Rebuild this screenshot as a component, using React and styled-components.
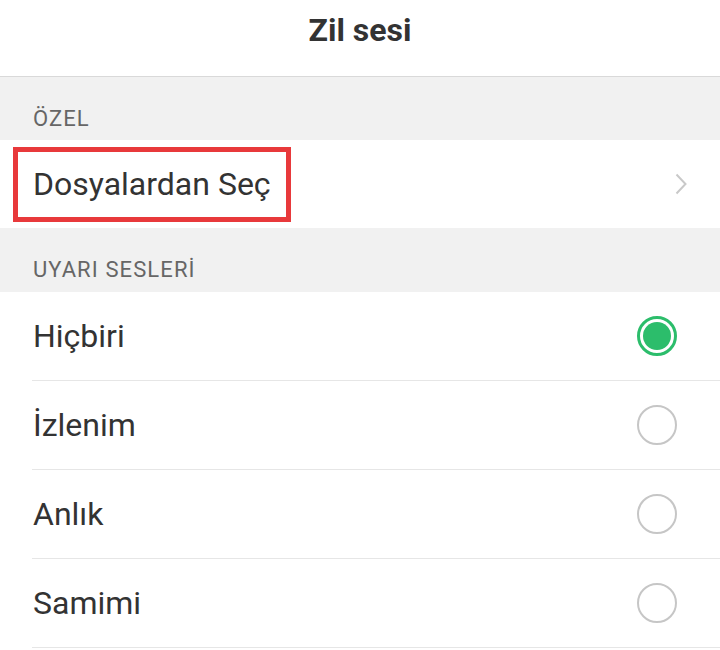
import React, { useState } from 'react';
import styled, { createGlobalStyle } from 'styled-components';

const GlobalStyle = createGlobalStyle`
  html, body {
    margin: 0;
    padding: 0;
    background: #ffffff;
  }

  body {
    font-family: Roboto, "Noto Sans", "Liberation Sans", sans-serif;
    -webkit-font-smoothing: antialiased;
  }
`;

const Page = styled.div`
  width: 720px;
  height: 650px;
  overflow: hidden;
  background: #ffffff;
`;

const Header = styled.header`
  display: flex;
  justify-content: center;
  height: 77px;
  padding-top: 11px;
  box-sizing: border-box;
  border-bottom: 1px solid #d9d9d9;
`;

const Title = styled.h1`
  margin: 0;
  font-size: 32px;
  line-height: 38px;
  font-weight: 700;
  color: #333333;
`;

const SectionLabel = styled.div`
  height: ${({ tall }) => (tall ? '64px' : '63px')};
  padding: 31px 0 0 33px;
  box-sizing: border-box;
  background: #f1f1f1;
  font-size: 22px;
  line-height: 22px;
  letter-spacing: 1.1px;
  color: #666666;
`;

const Row = styled.div`
  display: flex;
  align-items: center;
  justify-content: space-between;
  height: 88px;
  padding: 0 33px 0 33px;
  box-sizing: border-box;
  background: #ffffff;
  cursor: pointer;
`;

const OptionRow = styled(Row)`
  height: 89px;
  margin-left: 32px;
  padding: 0 44px 0 1px;
  border-bottom: 1px solid #e6e6e6;
`;

const Label = styled.span`
  font-size: 32px;
  line-height: 36px;
  color: #333333;
`;

const Highlighted = styled.div`
  margin-left: -20px;
  padding: 0 15px;
  height: 75px;
  display: flex;
  align-items: center;
  border: 5px solid #e8393b;
  box-sizing: border-box;
`;

const Radio = styled.span`
  display: flex;
  align-items: center;
  justify-content: center;
  width: 40px;
  height: 40px;
  box-sizing: border-box;
  border-radius: 50%;
  border: ${({ checked }) => (checked ? '3px solid #2cbd6b' : '2px solid #c6c6c6')};
  margin-right: -1px;
`;

const RadioDot = styled.span`
  width: 28px;
  height: 28px;
  border-radius: 50%;
  background: #2cbd6b;
`;

const Chevron = () => (
  <svg width="12" height="22" viewBox="0 0 12 22">
    <polyline points="1.5,1.5 10.5,11 1.5,20.5" fill="none" stroke="#c9c9c9" strokeWidth="2" />
  </svg>
);

const tones = ['Hiçbiri', 'İzlenim', 'Anlık', 'Samimi'];

const App = () => {
  const [selected, setSelected] = useState('Hiçbiri');

  return (
    <Page>
      <GlobalStyle />
      <Header>
        <Title>Zil sesi</Title>
      </Header>

      <SectionLabel>ÖZEL</SectionLabel>
      <Row>
        <Highlighted>
          <Label>Dosyalardan Seç</Label>
        </Highlighted>
        <Chevron />
      </Row>

      <SectionLabel tall>UYARI SESLERİ</SectionLabel>
      {tones.map((tone) => (
        <OptionRow key={tone} onClick={() => setSelected(tone)}>
          <Label>{tone}</Label>
          <Radio checked={selected === tone}>
            {selected === tone && <RadioDot />}
          </Radio>
        </OptionRow>
      ))}
    </Page>
  );
};

export default App;
